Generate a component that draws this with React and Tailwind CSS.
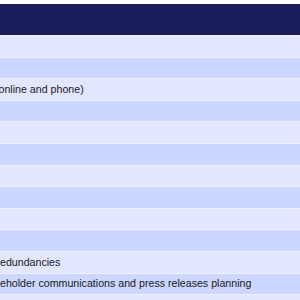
import React from 'react';

const rows = [
  { text: '' },
  { text: '' },
  { text: 'online and phone)', shift: 'ml-[-1.5px]' },
  { text: '' },
  { text: '' },
  { text: '' },
  { text: '' },
  { text: '' },
  { text: '' },
  { text: '' },
  { text: 'edundancies', shift: 'ml-[0px]' },
  { text: 'eholder communications and press releases planning', shift: 'ml-[0px]' },
  { text: '' },
];

const App = () => {
  return (
    <div className="w-[300px] h-[300px] overflow-hidden bg-white pt-[4.4px] font-['Liberation_Sans',Arial,sans-serif]">
      {/* header */}
      <div className="h-[30.6px] bg-[#1b1c5a]"></div>

      {rows.map((row, key) => (
        <div
          key={key}
          className={`h-[21.6px] border-t border-[#eef1ff] flex items-center pt-[1px] whitespace-nowrap overflow-hidden text-[10.65px] text-[#1a1a1a] ${
            key % 2 === 0 ? 'bg-[#e1e7ff]' : 'bg-[#ccd6ff]'
          }`}
        >
          <span className={row.shift}>{row.text}</span>
        </div>
      ))}
    </div>
  );
};

export default App;
